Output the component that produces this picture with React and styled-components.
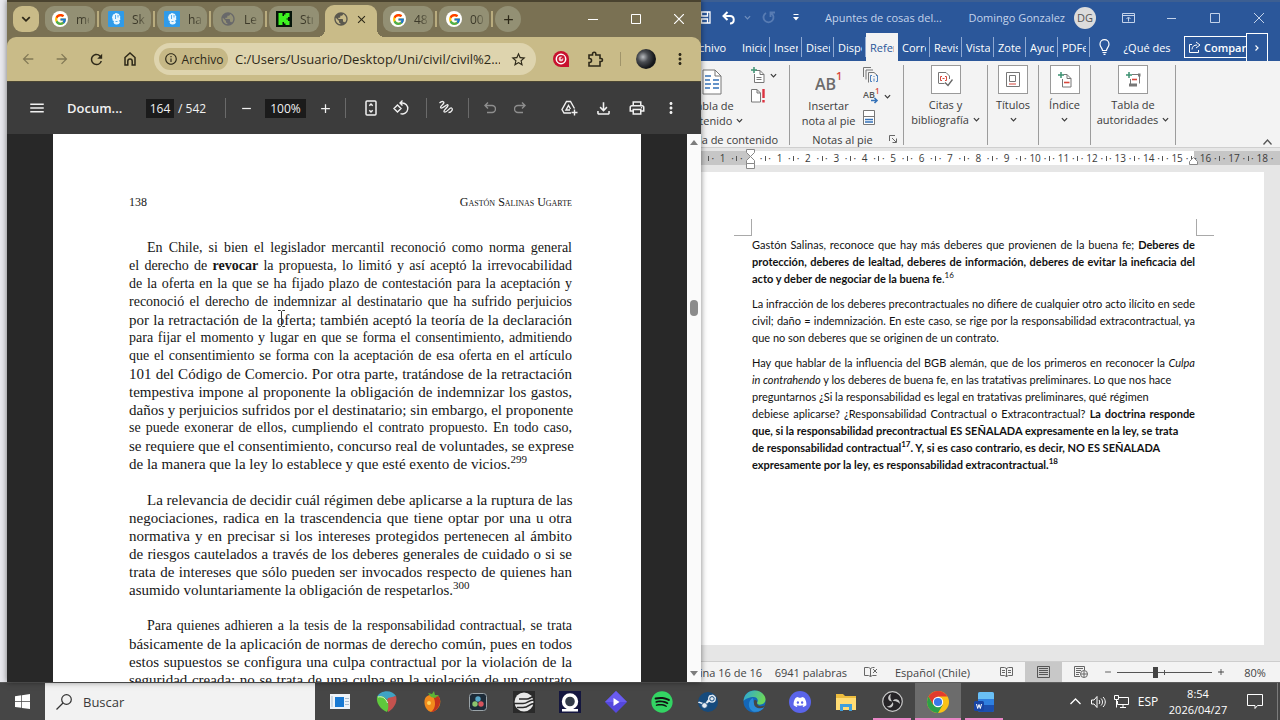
import React, { useState } from 'react';
import styled, { createGlobalStyle } from 'styled-components';
import { FcGoogle } from 'react-icons/fc';
import { FaSpotify, FaSteam, FaDiscord } from 'react-icons/fa';
import {
    MdArrowBack,
    MdArrowForward,
    MdRefresh,
    MdStarBorder,
    MdMoreVert,
    MdMenu,
    MdRemove,
    MdAdd,
    MdClose,
    MdOutlineInfo,
    MdPublic,
    MdOutlineFileDownload,
    MdOutlinePrint,
} from 'react-icons/md';

const GlobalStyle = createGlobalStyle`
* {
    box-sizing: border-box;
}
body {
    margin: 0;
    font-family: 'Open Sans', 'Noto Sans', sans-serif;
    font-size: 12px;
    overflow: hidden;
}
button, input {
    font: inherit;
    color: inherit;
    margin: 0;
    padding: 0;
    border: none;
    background: none;
}
button {
    display: flex;
    align-items: center;
    justify-content: center;
    flex-shrink: 0;
}
svg {
    display: block;
    flex-shrink: 0;
}
p {
    margin: 0;
}
`

const Desktop = styled.div`
position: relative;
height: 100vh;
display: flex;
flex-direction: column;
background-color: #e9e9ee;
`
const Workspace = styled.div`
flex: 1;
min-height: 0;
display: flex;
justify-content: flex-end;
`

/* ---------- browser window ---------- */

const BrowserWindow = styled.section`
position: absolute;
top: 0;
left: 7px;
bottom: 38px;
width: calc(50% + 54px);
display: flex;
flex-direction: column;
background-color: #7a7153;
border-top: 2px solid #4a432f;
box-shadow: 0 0 6px #00000080;
overflow: hidden;
`
const TabStrip = styled.div`
height: 35px;
display: flex;
align-items: center;
padding-left: 6px;
padding-bottom: 1px;
flex-shrink: 0;
`
const TabSearch = styled.button`
width: 26px;
height: 26px;
border-radius: 9px;
background-color: #c9bb88;
color: #2d2818;
`
const TabDivider = styled.span`
width: 2px;
height: 16px;
margin: 0 2px;
flex-shrink: 0;
background-color: ${props => props.$hidden ? 'transparent' : '#b9ac7e'};
`
const Tab = styled.button`
width: 50px;
height: 26px;
justify-content: flex-start;
gap: 8px;
padding-left: 7px;
border-radius: 9px;
background-color: #939074;
color: #3d3a2a;
`
const TabText = styled.span`
width: 13px;
overflow: hidden;
white-space: nowrap;
text-align: left;
mask-image: linear-gradient(90deg, #000 50%, #0005);
`
const ActiveTab = styled.div`
position: relative;
width: 52px;
height: 32px;
margin-top: 4px;
display: flex;
align-items: center;
gap: 6px;
padding: 0 0 4px 8px;
border-radius: 9px 9px 0 0;
background-color: #c9bb88;
color: #2d2818;
flex-shrink: 0;
&::before, &::after {
    content: '';
    position: absolute;
    bottom: 0;
    width: 8px;
    height: 8px;
}
&::before {
    left: -8px;
    background: radial-gradient(circle at 0 0, transparent 8px, #c9bb88 8px);
}
&::after {
    right: -8px;
    background: radial-gradient(circle at 100% 0, transparent 8px, #c9bb88 8px);
}
`
const GoogleBadge = styled.span`
width: 16px;
height: 16px;
border-radius: 50%;
background-color: #fff;
display: flex;
align-items: center;
justify-content: center;
flex-shrink: 0;
`
const NewTab = styled.button`
width: 26px;
height: 26px;
border-radius: 50%;
background-color: #939074;
color: #2d2818;
`
const WindowButtons = styled.div`
margin-left: auto;
padding-right: 1px;
display: flex;
`
const WindowButton = styled.button`
width: ${props => props.$w || 43}px;
height: 30px;
color: #fff;
`
const Toolbar = styled.div`
height: 44px;
display: flex;
align-items: center;
padding: 0 4px;
background-color: #c9bb88;
color: #2d2818;
border-radius: 9px 9px 0 0;
flex-shrink: 0;
`
const IconButton = styled.button`
width: ${props => props.$w || 34}px;
height: 32px;
opacity: ${props => props.$off ? 0.45 : 1};
`
const Omnibox = styled.div`
flex: 1;
min-width: 0;
height: 32px;
margin: 0 8px 0 7px;
padding-left: 5px;
display: flex;
align-items: center;
border-radius: 16px;
background-color: #ded4ae;
`
const SiteChip = styled.button`
height: 22px;
width: 69px;
gap: 4px;
border-radius: 11px;
background-color: #c6b886;
`
const UrlInput = styled.input`
flex: 1;
min-width: 0;
margin-left: 7px;
font-size: 13px;
`
const ToolbarLine = styled.span`
width: 1px;
height: ${props => props.$h || 14}px;
margin-left: ${props => props.$before || 8}px;
margin-right: ${props => props.$after || 8}px;
background-color: ${props => props.$color || '#a0946a'};
flex-shrink: 0;
`
const Avatar = styled.button`
width: 20px;
height: 20px;
margin: 0 7px;
border-radius: 50%;
background: radial-gradient(circle at 35% 40%, #b9bcc0 0, #4a4d52 30%, #15171a 65%);
`

/* ---------- pdf viewer ---------- */

const PdfBar = styled.div`
height: 53px;
display: flex;
align-items: center;
padding: 0 13px;
background-color: #3c3c3c;
color: #f1f1f1;
border-top: 1px solid #4b4634;
flex-shrink: 0;
`
const PdfTitle = styled.span`
width: 92px;
padding-left: 13px;
font-size: 13px;
font-weight: 600;
white-space: nowrap;
`
const PdfField = styled.input`
width: ${props => props.$w}px;
height: 19px;
text-align: center;
background-color: #1b1b1b;
`
const PageTotal = styled.span`
width: 40px;
margin-left: 4px;
white-space: nowrap;
`
const Spacer = styled.span`
flex: 1;
`
const PdfBody = styled.div`
flex: 1;
min-height: 0;
display: flex;
background-color: #282828;
`
const PdfPage = styled.article`
flex: 1;
min-width: 0;
margin: 0 46px;
padding: 59px 69px 0 76px;
background-color: #fff;
color: #161616;
font-family: 'Liberation Serif', serif;
font-size: 15px;
line-height: 18px;
overflow: hidden;
`
const RunningHead = styled.div`
display: flex;
justify-content: space-between;
font-size: 12px;
margin-bottom: 28px;
`
const SmallCaps = styled.span`
font-variant: small-caps;
`
const PdfParagraph = styled.p`
margin-bottom: 18px;
text-indent: 18px;
`
const PdfLine = styled.span`
display: block;
height: 18px;
font-size: ${props => props.$tight ? 14 : 15}px;
white-space: nowrap;
text-align: left;
text-align-last: ${props => props.$last ? 'left' : 'justify'};
&:not(:first-child) {
    text-indent: 0;
}
`
const Sup = styled.sup`
font-size: ${props => props.$small ? 8 : 11}px;
line-height: 0;
font-weight: ${props => props.$plain ? 400 : 'inherit'};
`
const Scrollbar = styled.div`
width: 14px;
display: flex;
flex-direction: column;
align-items: center;
justify-content: space-between;
padding: 5px 0 5px;
background-color: #fafafa;
color: #7d7d7d;
`
const ScrollTrack = styled.div`
flex: 1;
width: 8px;
padding-top: 155px;
`
const ScrollThumb = styled.div`
height: 16px;
border-radius: 4px;
background-color: #8b8b8b;
`
const Pointer = styled.svg`
position: absolute;
left: 270px;
top: 308px;
`

/* ---------- word processor ---------- */

const WordWindow = styled.section`
width: 50%;
display: flex;
flex-direction: column;
background-color: #e6e6e6;
color: #3b3b3b;
font-size: 11px;
`
const WordTitleBar = styled.div`
height: 33px;
display: flex;
align-items: center;
padding-left: 53px;
border-top: 2px solid #3d5f92;
background-color: #2b579a;
color: #c4d3ea;
flex-shrink: 0;
`
const WordTitle = styled.span`
width: 126px;
margin-left: 18px;
font-size: 11px;
white-space: nowrap;
`
const UserName = styled.span`
flex: 1;
text-align: right;
padding-right: 9px;
white-space: nowrap;
`
const UserBadge = styled.span`
width: 22px;
height: 22px;
margin-right: 11px;
line-height: 22px;
border-radius: 50%;
background-color: #dcdcdc;
color: #555;
text-align: center;
`
const RibbonTabs = styled.nav`
height: 28px;
display: flex;
align-items: stretch;
background-color: #2b579a;
color: #fff;
flex-shrink: 0;
`
const FileTab = styled.button`
width: 98px;
padding-right: 12px;
justify-content: flex-end;
`
const RibbonTab = styled.button`
width: 32px;
padding: 0 4px;
display: block;
overflow: hidden;
white-space: nowrap;
text-align: left;
background: ${props => props.$active ? '#f3f3f3' : 'linear-gradient(#8fa9d2, #8fa9d2) right center / 1px 20px no-repeat'};
color: ${props => props.$active ? '#2b579a' : '#fff'};
`
const TabLabel = styled.span`
display: block;
overflow: hidden;
`
const TellMe = styled.button`
width: 84px;
gap: 13px;
padding-left: 6px;
overflow: hidden;
white-space: nowrap;
`
const ShareButton = styled.button`
flex: 1;
justify-content: flex-start;
gap: 3px;
height: 22px;
margin: 3px 0 3px 10px;
padding-left: 4px;
border: 1px solid #fff;
border-right: none;
font-weight: 600;
font-size: 11px;
overflow: hidden;
white-space: nowrap;
`
const MoreTabs = styled.button`
width: 22px;
border: 1px solid #fff;
border-bottom: none;
margin-right: 12px;
`
const Ribbon = styled.div`
height: 87px;
display: flex;
padding: 4px 0 2px 29px;
background-color: #f3f3f3;
border-bottom: 1px solid #cfcfcf;
flex-shrink: 0;
`
const RibbonGroup = styled.div`
width: ${props => props.$w}px;
display: flex;
flex-direction: column;
justify-content: space-between;
border-right: 1px solid #9c9c9c;
flex-shrink: 0;
`
const GroupTools = styled.div`
display: flex;
justify-content: center;
gap: 8px;
`
const BigButton = styled.button`
flex-direction: column;
justify-content: flex-start;
line-height: 15px;
white-space: nowrap;
`
const BigIcon = styled.span`
height: 33px;
display: flex;
align-items: center;
`
const BoxedIcon = styled.span`
width: 30px;
height: 29px;
margin-bottom: 3px;
display: flex;
align-items: center;
justify-content: center;
border: 1px solid #9a9a9a;
background-color: #fff;
`
const ButtonLine = styled.span`
display: flex;
align-items: center;
justify-content: center;
gap: 4px;
min-height: 15px;
`
const SmallTools = styled.div`
display: flex;
flex-direction: column;
gap: 5px;
padding-top: 2px;
`
const SmallButton = styled.button`
gap: 5px;
height: 16px;
justify-content: flex-start;
`
const GroupName = styled.div`
display: flex;
align-items: center;
justify-content: center;
gap: 16px;
height: 12px;
padding-left: ${props => props.$indent || 0}px;
white-space: nowrap;
`
const CollapseRibbon = styled.button`
margin: auto 8px 0 auto;
`
const Ruler = styled.div`
position: relative;
height: 14px;
margin: 3px 0 7px;
padding: 0 4px 0 68px;
display: grid;
grid-template-columns: repeat(20, 1fr);
align-items: center;
background: linear-gradient(90deg, #c6c6c6 111px, #fff 111px, #fff calc(100% - 86px), #c6c6c6 calc(100% - 86px));
font-size: 10px;
line-height: 14px;
flex-shrink: 0;
`
const RulerCell = styled.span`
display: grid;
grid-template-columns: 1px 1fr 12px 1fr;
align-items: center;
justify-items: center;
white-space: nowrap;
&::before {
    content: '';
    width: 1px;
    height: 5px;
    background-color: #555;
}
`
const Indent = styled.svg`
position: absolute;
top: -2px;
left: ${props => props.$right ? 'auto' : '106px'};
right: ${props => props.$right ? '82px' : 'auto'};
`
const WordPage = styled.article`
flex: 1;
margin: 0 16px 16px 32px;
padding: 47px 50px 0 62px;
background-color: #fff;
color: #111;
font-family: 'Lato', sans-serif;
font-size: 11px;
line-height: 17px;
`
const Corners = styled.div`
display: flex;
justify-content: space-between;
`
const Corner = styled.span`
width: 18px;
height: 17px;
border-bottom: 1px solid #a9a9a9;
border-${props => props.$side}: 1px solid #a9a9a9;
`
const DocText = styled.div`
padding: 0 19px 0 18px;
`
const DocParagraph = styled.p`
margin-bottom: 8px;
`
const DocLine = styled.span`
display: block;
white-space: nowrap;
text-align-last: ${props => props.$full ? 'justify' : 'left'};
`
const StatusBar = styled.footer`
height: 21px;
display: flex;
align-items: center;
padding-left: 40px;
background-color: #f3f3f3;
border-top: 1px solid #cdcdcd;
color: #444;
white-space: nowrap;
flex-shrink: 0;
`
const StatusItem = styled.span`
width: ${props => props.$w}px;
text-align: ${props => props.$align || 'left'};
flex-shrink: 0;
`
const ViewButton = styled.button`
width: 37px;
height: 20px;
background-color: ${props => props.$active ? '#c8c8c8' : 'transparent'};
`
const ZoomSlider = styled.input`
flex: 1;
min-width: 0;
height: 14px;
appearance: none;
background: linear-gradient(#555, #555) center / 100% 1px no-repeat, linear-gradient(#555, #555) center / 1px 5px no-repeat;
&::-webkit-slider-thumb {
    appearance: none;
    width: 5px;
    height: 11px;
    background-color: #444;
}
`

/* ---------- taskbar ---------- */

const Taskbar = styled.footer`
height: 38px;
display: flex;
align-items: stretch;
background-color: #464646;
border-top: 1px solid #5c5c5c;
color: #fff;
flex-shrink: 0;
`
const StartButton = styled.button`
width: 45px;
`
const SearchBox = styled.label`
width: 270px;
margin-right: 2px;
padding-left: 11px;
display: flex;
align-items: center;
gap: 11px;
background-color: #f2f2f2;
color: #3a3a3a;
`
const SearchInput = styled.input`
flex: 1;
min-width: 0;
font-size: 13px;
&::placeholder {
    color: #3a3a3a;
    opacity: 1;
}
`
const TaskButton = styled.button`
width: 46px;
background-color: ${props => props.$active ? '#6c6c6c' : 'transparent'};
background-image: ${props => props.$open ? 'linear-gradient(#ea86c6, #ea86c6)' : 'none'};
background-position: center bottom;
background-size: ${props => props.$active ? 46 : 38}px 2px;
background-repeat: no-repeat;
`
const Tray = styled.div`
margin-left: auto;
display: flex;
align-items: stretch;
border-right: 1px solid #7c7c7c;
margin-right: 2px;
`
const TrayButton = styled.button`
width: ${props => props.$w || 23}px;
`
const Clock = styled.button`
width: 70px;
flex-direction: column;
line-height: 16px;
font-size: 11px;
`

// the ribbon is too narrow for its tabs, so their names are cut short
const TAB_NAMES = ['Inicio', 'Inser', 'Diseñ', 'Dispo', 'Refer', 'Corre', 'Revis', 'Vista', 'Zote', 'Ayud', 'PDFe']

const RULER = ['1', '', '1', '2', '3', '4', '5', '6', '7', '8', '9', '10', '11', '12', '13', '14', '15', '16', '17', '18']

const BOOK = [
    [
        { tight: true, text: 'En Chile, si bien el legislador mercantil reconoció como norma general' },
        { tight: true, text: <>el derecho de <b>revocar</b> la propuesta, lo limitó y así aceptó la irrevocabilidad</> },
        { tight: true, text: 'de la oferta en la que se ha fijado plazo de contestación para la aceptación y' },
        { tight: true, text: 'reconoció el derecho de indemnizar al destinatario que ha sufrido perjuicios' },
        { text: 'por la retractación de la oferta; también aceptó la teoría de la declaración' },
        { tight: true, text: 'para fijar el momento y lugar en que se forma el consentimiento, admitiendo' },
        { tight: true, text: 'que el consentimiento se forma con la aceptación de esa oferta en el artículo' },
        { text: '101 del Código de Comercio. Por otra parte, tratándose de la retractación' },
        { text: 'tempestiva impone al proponente la obligación de indemnizar los gastos,' },
        { text: 'daños y perjuicios sufridos por el destinatario; sin embargo, el proponente' },
        { tight: true, text: 'se puede exonerar de ellos, cumpliendo el contrato propuesto. En todo caso,' },
        { text: 'se requiere que el consentimiento, concurso real de voluntades, se exprese' },
        { text: <>de la manera que la ley lo establece y que esté exento de vicios.<Sup>299</Sup></> },
    ],
    [
        { text: 'La relevancia de decidir cuál régimen debe aplicarse a la ruptura de las' },
        { text: 'negociaciones, radica en la trascendencia que tiene optar por una u otra' },
        { text: 'normativa y en precisar si los intereses protegidos pertenecen al ámbito' },
        { text: 'de riesgos cautelados a través de los deberes generales de cuidado o si se' },
        { text: 'trata de intereses que sólo pueden ser invocados respecto de quienes han' },
        { text: <>asumido voluntariamente la obligación de respetarlos.<Sup>300</Sup></> },
    ],
    [
        { tight: true, text: 'Para quienes adhieren a la tesis de la responsabilidad contractual, se trata' },
        { text: 'básicamente de la aplicación de normas de derecho común, pues en todos' },
        { text: 'estos supuestos se configura una culpa contractual por la violación de la' },
        { text: 'seguridad creada; no se trata de una culpa en la violación de un contrato' },
    ],
]

const Caret = ({ size = 7 }) => (
    <svg width={size} height={size} viewBox="0 0 8 8" fill="none" stroke="currentColor" strokeWidth="1.4">
        <path d="M1 2.5 4 5.5 7 2.5" />
    </svg>
)

const BlueFavicon = () => (
    <svg width="16" height="16" viewBox="0 0 16 16">
        <rect width="16" height="16" rx="1" fill="#2f9bea" />
        <path d="M4.500 5q0-2 2-2 1-1.500 3-.5 2 0 2 2 1.500 1 .5 2.500 1 2-1 2.500l1 2q-1 2.500-4 2-2 0-2.500-2l.5-1.500q-2 0-1.500-2-1-1.500 0-3z" fill="#e8f6ff" />
        <path d="M7.500 4v4M10 4v2.500M7.500 10.500h2" stroke="#2f9bea" strokeWidth=".8" />
    </svg>
)

const KickFavicon = () => (
    <svg width="16" height="16" viewBox="0 0 16 16">
        <rect width="16" height="16" fill="#06140a" />
        <path d="M2.500 2h4v3H8V3.500h1.500V2h4v4H12v1.500h-1.500v1H12V10h1.500v4h-4v-1.500H8V11H6.500v3h-4z" fill="#3df220" />
    </svg>
)

const Tabs = () => {
    const google = <GoogleBadge><FcGoogle size={13} /></GoogleBadge>
    const before = [
        { icon: google, text: 'me' },
        { icon: <BlueFavicon />, text: 'Sk' },
        { icon: <BlueFavicon />, text: 'ha' },
        { icon: <MdPublic size={16} color="#68686a" />, text: 'Le' },
        { icon: <KickFavicon />, text: 'Str' },
    ]
    const after = [
        { icon: google, text: '48' },
        { icon: google, text: '00' },
    ]
    return (
        <TabStrip>
            <TabSearch aria-label="Buscar pestañas"><Caret size={10} /></TabSearch>
            <TabDivider $hidden />
            {before.map((tab, i) => (
                <React.Fragment key={i}>
                    <Tab>{tab.icon}<TabText>{tab.text}</TabText></Tab>
                    <TabDivider $hidden={i === before.length - 1} />
                </React.Fragment>
            ))}
            <ActiveTab>
                <MdPublic size={16} color="#5b584d" />
                <button aria-label="Cerrar pestaña"><MdClose size={13} /></button>
            </ActiveTab>
            <TabDivider $hidden />
            {after.map((tab, i) => (
                <React.Fragment key={i}>
                    <Tab>{tab.icon}<TabText>{tab.text}</TabText></Tab>
                    <TabDivider />
                </React.Fragment>
            ))}
            <NewTab aria-label="Nueva pestaña"><MdAdd size={15} /></NewTab>
            <WindowButtons>
                <WindowButton aria-label="Minimizar">
                    <svg width="10" height="10" stroke="currentColor"><path d="M0 5.500h10" /></svg>
                </WindowButton>
                <WindowButton aria-label="Maximizar">
                    <svg width="10" height="10" stroke="currentColor" fill="none"><path d="M.5.5h9v9h-9z" /></svg>
                </WindowButton>
                <WindowButton aria-label="Cerrar">
                    <svg width="10" height="10" stroke="currentColor" strokeWidth="1.2"><path d="m0 0 10 10M10 0 0 10" /></svg>
                </WindowButton>
            </WindowButtons>
        </TabStrip>
    )
}

const BrowserToolbar = () => (
    <Toolbar>
        <IconButton $off aria-label="Atrás"><MdArrowBack size={16} /></IconButton>
        <IconButton $off aria-label="Adelante"><MdArrowForward size={16} /></IconButton>
        <IconButton aria-label="Recargar"><MdRefresh size={17} /></IconButton>
        <IconButton aria-label="Inicio">
            <svg width="12" height="14" viewBox="0 0 12 14" fill="none" stroke="currentColor" strokeWidth="1.5">
                <path d="M1 5.500 6 1l5 4.500V13H8.200V9.300a2.200 2.200 0 0 0-4.400 0V13H1z" />
            </svg>
        </IconButton>
        <Omnibox>
            <SiteChip><MdOutlineInfo size={14} />Archivo</SiteChip>
            <UrlInput aria-label="Dirección" defaultValue="C:/Users/Usuario/Desktop/Uni/civil/civil%2..." />
            <IconButton $w={36} aria-label="Favorito"><MdStarBorder size={17} /></IconButton>
        </Omnibox>
        <IconButton aria-label="Extensión">
            <svg width="16" height="16" viewBox="0 0 16 16">
                <path d="M8 0a8 8 0 1 0 0 16h8V8a8 8 0 0 0-8-8z" fill="#c8102e" />
                <circle cx="8" cy="8" r="4.700" fill="none" stroke="#fff" strokeWidth="1.500" />
                <circle cx="8" cy="8" r="2.400" fill="#f3c9cf" />
                <path d="m8 8 3-3" stroke="#c8102e" strokeWidth="1.500" />
            </svg>
        </IconButton>
        <IconButton aria-label="Extensiones">
            <svg width="17" height="17" viewBox="0 0 17 17" fill="none" stroke="currentColor" strokeWidth="1.600">
                <path d="M2 4h3.500V3a1.700 1.700 0 0 1 3.400 0v1H13v3.500h1a1.500 1.500 0 0 1 0 3h-1V15H2v-3.500h.5a2 2 0 0 0 0-4H2z" />
            </svg>
        </IconButton>
        <ToolbarLine />
        <Avatar aria-label="Perfil" />
        <IconButton aria-label="Menú"><MdMoreVert size={18} /></IconButton>
    </Toolbar>
)

const PdfToolbar = () => {
    const [page, setPage] = useState('164')
    const [zoom, setZoom] = useState('100%')

    return (
        <PdfBar>
            <IconButton aria-label="Menú"><MdMenu size={18} /></IconButton>
            <PdfTitle>Docum...</PdfTitle>
            <PdfField $w={28} aria-label="Página" value={page} onChange={e => setPage(e.target.value)} />
            <PageTotal>/ 542</PageTotal>
            <ToolbarLine $h={20} $before={7} $after={1} $color="#6a6a6a" />
            <IconButton $w={38} aria-label="Alejar"><MdRemove size={15} /></IconButton>
            <PdfField $w={41} aria-label="Zoom" value={zoom} onChange={e => setZoom(e.target.value)} />
            <IconButton $w={38} aria-label="Acercar"><MdAdd size={15} /></IconButton>
            <ToolbarLine $h={20} $before={1} $after={10} $color="#6a6a6a" />
            <IconButton $w={30} aria-label="Ajustar">
                <svg width="12" height="16" viewBox="0 0 12 16" fill="none" stroke="currentColor" strokeWidth="1.500">
                    <rect x="1" y="1" width="10" height="14" rx="1" />
                    <path d="M4.300 5.700 6 4l1.700 1.700M4.300 10.300 6 12l1.700-1.700" />
                </svg>
            </IconButton>
            <IconButton $w={30} aria-label="Girar">
                <svg width="16" height="16" viewBox="0 0 16 16" fill="none" stroke="currentColor" strokeWidth="1.400">
                    <path d="M1 8.500 4.500 5 8 8.500 4.500 12zM7 3h2a5.500 5.500 0 1 1-1.500 10.700M9.500.5 7 3l2.500 2.500" />
                </svg>
            </IconButton>
            <ToolbarLine $h={20} $before={10} $after={4} $color="#6a6a6a" />
            <IconButton $w={30} aria-label="Dibujar">
                <svg width="16" height="16" viewBox="0 0 16 16" fill="none" stroke="currentColor" strokeWidth="1.300">
                    <path d="M1.500 3C4 .5 7 1.500 5.500 3.500S1.500 7 3 8s6-4.500 7-3-6 6-3.500 7 5-5 7-4 0 4.500-3 4.500" />
                </svg>
            </IconButton>
            <ToolbarLine $h={20} $before={7} $after={6} $color="#6a6a6a" />
            <IconButton $w={30} $off aria-label="Deshacer">
                <svg width="12" height="12" viewBox="0 0 12 12" fill="none" stroke="currentColor" strokeWidth="1.400">
                    <path d="M4 .5 1 3.500l3 3M1 3.500h7a3.300 3.300 0 0 1 0 7H3" />
                </svg>
            </IconButton>
            <IconButton $w={30} $off aria-label="Rehacer">
                <svg width="12" height="12" viewBox="0 0 12 12" fill="none" stroke="currentColor" strokeWidth="1.400">
                    <path d="m8 .5 3 3-3 3M11 3.500H4a3.300 3.300 0 0 0 0 7h5" />
                </svg>
            </IconButton>
            <Spacer />
            <IconButton aria-label="Guardar en Drive">
                <svg width="17" height="16" viewBox="0 0 17 16" fill="none" stroke="currentColor" strokeWidth="1.400">
                    <path d="M10 13H3L1 9.500 5.500 1.500h4l4 7M9 10H5l2.500-4.500L9.500 9M13.500 9.500v6M10.500 12.500h6" />
                </svg>
            </IconButton>
            <IconButton aria-label="Descargar"><MdOutlineFileDownload size={19} /></IconButton>
            <IconButton aria-label="Imprimir"><MdOutlinePrint size={18} /></IconButton>
            <IconButton aria-label="Más"><MdMoreVert size={18} /></IconButton>
        </PdfBar>
    )
}

const Browser = () => (
    <BrowserWindow>
        <Tabs />
        <BrowserToolbar />
        <PdfToolbar />
        <PdfBody>
            <PdfPage>
                <RunningHead>
                    <span>138</span>
                    <SmallCaps>Gastón Salinas Ugarte</SmallCaps>
                </RunningHead>
                {BOOK.map((lines, i) => (
                    <PdfParagraph key={i}>
                        {lines.map((line, j) => (
                            <PdfLine key={j} $tight={line.tight} $last={i < 2 && j === lines.length - 1}>{line.text}</PdfLine>
                        ))}
                    </PdfParagraph>
                ))}
            </PdfPage>
            <Scrollbar>
                <svg width="8" height="6"><path d="M0 6h8L4 1z" fill="currentColor" /></svg>
                <ScrollTrack><ScrollThumb /></ScrollTrack>
                <svg width="8" height="6"><path d="M0 0h8L4 5z" fill="currentColor" /></svg>
            </Scrollbar>
        </PdfBody>
        <Pointer width="9" height="18" viewBox="0 0 9 18" fill="none" stroke="#333">
            <path d="M1 .5h2.500l1 1 1-1H8M4.500 1.500v14M1 16.500h2.500l1-1 1 1H8" />
        </Pointer>
    </BrowserWindow>
)

const SheetIcon = ({ w = 20, h = 26 }) => (
    <svg width={w} height={h} viewBox="0 0 20 26" fill="none">
        <path d="M1 1h12l6 6v18H1z" fill="#fff" stroke="#777" />
        <path d="M13 1v6h6" stroke="#777" />
        <path d="M3 7h6M3 11h5M3 15h6M3 19h5M11 11h6M11 15h6M11 19h6" stroke="#3572b8" strokeWidth="1.300" />
    </svg>
)

const WordRibbon = () => (
    <Ribbon>
        <RibbonGroup $w={121}>
            <GroupTools>
                <BigButton>
                    <BigIcon><SheetIcon /></BigIcon>
                    <ButtonLine>Tabla de</ButtonLine>
                    <ButtonLine>contenido <Caret /></ButtonLine>
                </BigButton>
                <SmallTools>
                    <SmallButton aria-label="Agregar texto">
                        <svg width="14" height="16" viewBox="0 0 14 16" fill="none">
                            <path d="M4.500 3.500H9l4 4v8H3.500V7" stroke="#777" fill="#fff" />
                            <path d="M9 3.500v4h4M5.500 10.500h5M5.500 12.500h5" stroke="#777" />
                            <path d="M3 0v6M0 3h6" stroke="#3d9172" strokeWidth="1.500" />
                        </svg>
                        <Caret />
                    </SmallButton>
                    <SmallButton aria-label="Actualizar tabla">
                        <svg width="15" height="14" viewBox="0 0 15 14" fill="none">
                            <path d="M.5.500H6l3.500 3.500v9H.5zM6 .5V4h3.500" fill="#fff" stroke="#777" />
                            <path d="M12.500 0v9M12.500 11v2.500" stroke="#dc3340" strokeWidth="2.400" />
                        </svg>
                    </SmallButton>
                </SmallTools>
            </GroupTools>
            <GroupName>Tabla de contenido</GroupName>
        </RibbonGroup>
        <RibbonGroup $w={114}>
            <GroupTools>
                <BigButton>
                    <BigIcon>
                        <svg width="28" height="24" viewBox="0 0 28 24">
                            <text x="0" y="20" fontFamily="Open Sans, sans-serif" fontSize="16" fontWeight="600" fill="#6c6c6c">AB</text>
                            <text x="21" y="10" fontFamily="Open Sans, sans-serif" fontSize="11" fontWeight="600" fill="#d8473c">1</text>
                        </svg>
                    </BigIcon>
                    <ButtonLine>Insertar</ButtonLine>
                    <ButtonLine>nota al pie</ButtonLine>
                </BigButton>
                <SmallTools>
                    <SmallButton aria-label="Nota al final">
                        <svg width="16" height="16" viewBox="0 0 16 16" fill="none">
                            <path d="M.5 10V.5H8M3 12.500V3h7" stroke="#777" />
                            <path d="M5.500 15.500v-10H11l3.500 3" stroke="#777" />
                            <path d="M9 8.500H7.500v6H9M13 8.500h1.500v6H13M11 9v1M11 11.500v3" stroke="#4a7fbd" />
                        </svg>
                    </SmallButton>
                    <SmallButton aria-label="Siguiente nota">
                        <svg width="16" height="16" viewBox="0 0 16 16">
                            <text x="0" y="10" fontFamily="Open Sans, sans-serif" fontSize="9" fontWeight="600" fill="#555">AB</text>
                            <text x="12" y="6" fontFamily="Open Sans, sans-serif" fontSize="8" fontWeight="600" fill="#d8473c">1</text>
                            <path d="M8 12.500h6M11.500 10l2.500 2.500-2.500 2.500" stroke="#3572b8" strokeWidth="1.600" fill="none" />
                        </svg>
                        <Caret />
                    </SmallButton>
                    <SmallButton aria-label="Mostrar notas">
                        <svg width="12" height="15" viewBox="0 0 12 15" fill="none">
                            <path d="M.5.500h11v14H.5z" fill="#fff" stroke="#777" />
                            <path d="M0 6.500h12" stroke="#777" />
                            <path d="M2 9.500h8M2 12h8" stroke="#3572b8" strokeWidth="1.500" />
                        </svg>
                    </SmallButton>
                </SmallTools>
            </GroupTools>
            <GroupName $indent={16}>
                Notas al pie
                <svg width="8" height="8" viewBox="0 0 8 8" fill="none" stroke="#666"><path d="M.5 6V.5H6M3 3l4 4M7.500 3.500v4h-4" /></svg>
            </GroupName>
        </RibbonGroup>
        <RibbonGroup $w={84}>
            <BigButton>
                <BoxedIcon>
                    <svg width="15" height="15" viewBox="0 0 15 15" fill="none">
                        <path d="M.5 11V.5H8L11.500 4v3M.5 11.500h6" stroke="#777" />
                        <path d="M4 4.500H2.500v4H4M7 4.500h1.500v4H7M4.500 6.500h2" stroke="#d8473c" />
                        <path d="m7 10.500 3 3 4.500-6" stroke="#666" strokeWidth="1.300" />
                    </svg>
                </BoxedIcon>
                <ButtonLine>Citas y</ButtonLine>
                <ButtonLine>bibliografía <Caret /></ButtonLine>
            </BigButton>
        </RibbonGroup>
        <RibbonGroup $w={51}>
            <BigButton>
                <BoxedIcon>
                    <svg width="14" height="15" viewBox="0 0 14 15" fill="none">
                        <path d="M.5.500h13v14H.5z" stroke="#777" />
                        <path d="M3.500 3.500h6v6h-6z" stroke="#777" />
                        <path d="M3 12h7" stroke="#d8473c" />
                    </svg>
                </BoxedIcon>
                <ButtonLine>Títulos</ButtonLine>
                <ButtonLine><Caret /></ButtonLine>
            </BigButton>
        </RibbonGroup>
        <RibbonGroup $w={52}>
            <BigButton>
                <BoxedIcon>
                    <svg width="14" height="16" viewBox="0 0 14 16" fill="none">
                        <path d="M5.500 2.500H9l4 4v8.500H4.500V7M9 2.500v4h4" stroke="#777" />
                        <path d="M3 0v6M0 3h6" stroke="#3d9172" strokeWidth="1.500" />
                        <path d="M6 10.500h5.500" stroke="#d8473c" strokeWidth="1.600" />
                    </svg>
                </BoxedIcon>
                <ButtonLine>Índice</ButtonLine>
                <ButtonLine><Caret /></ButtonLine>
            </BigButton>
        </RibbonGroup>
        <RibbonGroup $w={85}>
            <BigButton>
                <BoxedIcon>
                    <svg width="15" height="15" viewBox="0 0 15 15" fill="none">
                        <path d="M6 2.500h7.500v9M4.500 7v5" stroke="#777" />
                        <path d="M12 1.500h2.500v3H12zM3 11.500h8v3H3z" fill="#777" />
                        <path d="M3 0v6M0 3h6" stroke="#3d9172" strokeWidth="1.500" />
                        <path d="M6 7.500h5" stroke="#d8473c" strokeWidth="1.600" />
                    </svg>
                </BoxedIcon>
                <ButtonLine>Tabla de</ButtonLine>
                <ButtonLine>autoridades <Caret /></ButtonLine>
            </BigButton>
        </RibbonGroup>
        <CollapseRibbon aria-label="Contraer cinta">
            <svg width="9" height="6" viewBox="0 0 9 6" fill="none" stroke="#555" strokeWidth="1.300"><path d="M.5 5.500 4.500 1l4 4.500" /></svg>
        </CollapseRibbon>
    </Ribbon>
)

const WordTop = () => (
    <>
        <WordTitleBar>
            <IconButton $w={22} aria-label="Guardar">
                <svg width="13" height="13" viewBox="0 0 13 13" fill="none" stroke="#fff" strokeWidth="1.300">
                    <path d="M1 1h11v11H1zM3.500 1v4h6V1M3.500 12V8h6v4" />
                </svg>
            </IconButton>
            <IconButton $w={28} aria-label="Deshacer">
                <svg width="14" height="14" viewBox="0 0 14 14" fill="none" stroke="#fff" strokeWidth="2">
                    <path d="M5.500 1 1.500 5l4 4M1.500 5H8c5 0 5 7.500 0 7.500" />
                </svg>
            </IconButton>
            <IconButton $w={8} $off aria-label="Opciones de deshacer"><Caret /></IconButton>
            <IconButton $w={34} $off aria-label="Rehacer">
                <svg width="13" height="13" viewBox="0 0 13 13" fill="none" stroke="#8fa9d2" strokeWidth="1.800">
                    <path d="M4 2a5 5 0 1 0 5 0M8.500 6V1.500H13" />
                </svg>
            </IconButton>
            <IconButton $w={22} aria-label="Personalizar">
                <svg width="6" height="7" viewBox="0 0 6 7"><path d="M.5 0h5v1h-5zM0 3h6L3 6.500z" fill="#fff" /></svg>
            </IconButton>
            <WordTitle>Apuntes de cosas del...</WordTitle>
            <UserName>Domingo Gonzalez</UserName>
            <UserBadge>DG</UserBadge>
            <WindowButton $w={42} aria-label="Opciones de cinta">
                <svg width="13" height="10" viewBox="0 0 13 10" fill="none" stroke="#c4d3ea"><path d="M.5.500h12v9H.5zM.5 2.500h12M6.500 8.500v-4M4.500 6l2-2 2 2" /></svg>
            </WindowButton>
            <WindowButton $w={44} aria-label="Minimizar">
                <svg width="9" height="10" stroke="#c4d3ea"><path d="M0 5.500h9" /></svg>
            </WindowButton>
            <WindowButton $w={44} aria-label="Maximizar">
                <svg width="10" height="10" stroke="#c4d3ea" fill="none"><path d="M.5.5h9v9h-9z" /></svg>
            </WindowButton>
            <WindowButton aria-label="Cerrar">
                <svg width="10" height="10" stroke="#c4d3ea"><path d="m0 0 10 10M10 0 0 10" /></svg>
            </WindowButton>
        </WordTitleBar>
        <RibbonTabs>
            <FileTab>Archivo</FileTab>
            {TAB_NAMES.map(name => (
                <RibbonTab key={name} $active={name === 'Refer'}><TabLabel>{name}</TabLabel></RibbonTab>
            ))}
            <TellMe>
                <svg width="11" height="16" viewBox="0 0 11 16" fill="none" stroke="#fff" strokeWidth="1.200">
                    <path d="M3.500 11.500C3.500 9 1 8 1 5.200a4.500 4.500 0 0 1 9 0C10 8 7.500 9 7.500 11.500zM3.500 13.500h4M4.500 15.400h2" />
                </svg>
                ¿Qué des
            </TellMe>
            <ShareButton>
                <svg width="12" height="12" viewBox="0 0 12 12" fill="none" stroke="#fff">
                    <path d="M3 3.500H.5v8h9V9M3 8.500c0-3 2-4.500 5-4.500M7 1l4 3-4 3" />
                </svg>
                Compar
            </ShareButton>
            <MoreTabs aria-label="Más pestañas">
                <svg width="4" height="6" viewBox="0 0 4 6" fill="none" stroke="#fff" strokeWidth="1.200"><path d="m.5.500 2.500 2.500L.5 5.500" /></svg>
            </MoreTabs>
        </RibbonTabs>
    </>
)

const WordDocument = () => (
    <WordPage>
        <Corners>
            <Corner $side="right" />
            <Corner $side="left" />
        </Corners>
        <DocText>
            <DocParagraph>
                <DocLine $full>Gastón Salinas, reconoce que hay más deberes que provienen de la buena fe; <b>Deberes de</b></DocLine>
                <DocLine $full><b>protección, deberes de lealtad, deberes de información, deberes de evitar la ineficacia del</b></DocLine>
                <DocLine><b>acto y deber de negociar de la buena fe</b>.<Sup $small $plain>16</Sup></DocLine>
            </DocParagraph>
            <DocParagraph>
                <DocLine $full>La infracción de los deberes precontractuales no difiere de cualquier otro acto ilícito en sede</DocLine>
                <DocLine $full>civil; daño = indemnización. En este caso, se rige por la responsabilidad extracontractual, ya</DocLine>
                <DocLine>que no son deberes que se originen de un contrato.</DocLine>
            </DocParagraph>
            <DocParagraph>
                <DocLine $full>Hay que hablar de la influencia del BGB alemán, que de los primeros en reconocer la <i>Culpa</i></DocLine>
                <DocLine><i>in contrahendo</i> y los deberes de buena fe, en las tratativas preliminares. Lo que nos hace</DocLine>
                <DocLine>preguntarnos ¿Si la responsabilidad es legal en tratativas preliminares, qué régimen</DocLine>
                <DocLine $full>debiese aplicarse? ¿Responsabilidad Contractual o Extracontractual? <b>La doctrina responde</b></DocLine>
                <DocLine><b>que, si la responsabilidad precontractual ES SEÑALADA expresamente en la ley, se trata</b></DocLine>
                <DocLine><b>de responsabilidad contractual<Sup $small>17</Sup>. Y, si es caso contrario, es decir, NO ES SEÑALADA</b></DocLine>
                <DocLine><b>expresamente por la ley, es responsabilidad extracontractual.<Sup $small>18</Sup></b></DocLine>
            </DocParagraph>
        </DocText>
    </WordPage>
)

const Word = () => {
    const [zoom, setZoom] = useState(40)

    return (
        <WordWindow>
            <WordTop />
            <WordRibbon />
            <Ruler>
                {RULER.map((n, i) => (
                    <RulerCell key={i}><span>·</span><span>{n}</span><span>·</span></RulerCell>
                ))}
                <Indent width="9" height="20" viewBox="0 0 9 20" fill="#fff" stroke="#888">
                    <path d="M.5.500h8v3l-4 4-4-4zM.5 14.500v-3l4-4 4 4v3zM.5 14.500h8v5h-8z" />
                </Indent>
                <Indent $right width="9" height="16" viewBox="0 0 9 16" fill="#fff" stroke="#888">
                    <path d="M.5 15.500v-3l4-4 4 4v3z" />
                </Indent>
            </Ruler>
            <WordDocument />
            <StatusBar>
                <StatusItem $w={82} $align="right">Página 16 de 16</StatusItem>
                <StatusItem $w={85} $align="right">6941 palabras</StatusItem>
                <StatusItem $w={48}>
                    <svg width="62" height="12" viewBox="-17 0 62 12" fill="none" stroke="#666">
                        <path d="M.5 1.500h4l2 1v8l-2-1h-4zM6.500 2.500l2-1h2M6.500 10.500l2-1h4M9 3l4 4M13 3 9 7" />
                    </svg>
                </StatusItem>
                <StatusItem $w={93}>Español (Chile)</StatusItem>
                <ViewButton aria-label="Modo de lectura">
                    <svg width="13" height="12" viewBox="0 0 13 12" fill="none" stroke="#666"><path d="M.5 1.500h4l2 1 2-1h4v8h-4l-2 1-2-1h-4zM6.500 2v9M2 4.500h3M2 6.500h3M8 4.500h3M8 6.500h3" /></svg>
                </ViewButton>
                <ViewButton $active aria-label="Diseño de impresión">
                    <svg width="13" height="12" viewBox="0 0 13 12" fill="none" stroke="#555"><path d="M.5.500h12v11H.5zM2 2.500h9M2 4.500h9M2 6.500h9M2 8.500h9" /></svg>
                </ViewButton>
                <ViewButton aria-label="Diseño web">
                    <svg width="14" height="12" viewBox="0 0 14 12" fill="none" stroke="#666"><path d="M6 10.500H.5V.5h10V4M2 2.500h7M2 4.500h5M2 6.500h4M2 8.500h3" /><circle cx="10" cy="8" r="3.500" /><path d="M7 8h6M10 5v6" /></svg>
                </ViewButton>
                <IconButton $w={18} aria-label="Alejar"><MdRemove size={10} /></IconButton>
                <ZoomSlider type="range" aria-label="Zoom" value={zoom} onChange={e => setZoom(e.target.value)} />
                <IconButton $w={18} aria-label="Acercar"><MdAdd size={10} /></IconButton>
                <StatusItem $w={50} $align="center">80%</StatusItem>
            </StatusBar>
        </WordWindow>
    )
}

const SystemTaskbar = () => (
    <Taskbar>
        <StartButton aria-label="Inicio">
            <svg width="15" height="15" viewBox="0 0 15 15" fill="#fff"><path d="M0 2.200 6.300 1.300v5.900H0zM7 1.200 15 0v7.200H7zM0 7.900h6.300v5.900L0 12.900zM7 7.900h8V15l-8-1.100z" /></svg>
        </StartButton>
        <SearchBox>
            <svg width="16" height="16" viewBox="0 0 16 16" fill="none" stroke="#333" strokeWidth="1.200"><circle cx="10.500" cy="5.500" r="4.800" /><path d="M7 9 .5 15.500" /></svg>
            <SearchInput placeholder="Buscar" />
        </SearchBox>
        <TaskButton aria-label="Noticias">
            <svg width="20" height="15" viewBox="0 0 20 15"><path d="M0 0h20v15H0z" fill="#eef3f8" /><path d="M5 3h9v10H5z" fill="#1979d2" /><path d="M2 2v11M15 4.500h4M15 7.500h4M15 10.500h4" stroke="#a9bdd0" /></svg>
        </TaskButton>
        <TaskButton aria-label="Pétalos">
            <svg width="21" height="21" viewBox="0 0 21 21">
                <path d="M1 6C4-1 16-2 20 5l-8 4-5-3z" fill="#3fa3c4" />
                <path d="M20 5c2 7-3 13-8 16l-2-9 2-5z" fill="#c4524e" />
                <path d="M1 5.500c5-2 10 1 11 6.500.5 3 .5 6-1 9C4 18 0 12 1 5.500z" fill="#5fc93c" />
                <path d="M2 6c4-1 8 1 9.500 6" stroke="#dff0d8" fill="none" />
            </svg>
        </TaskButton>
        <TaskButton aria-label="Estudio de música">
            <svg width="20" height="22" viewBox="0 0 20 22">
                <path d="M4 6C1 9 2 19 9 21c9-1 11-11 8-15-3-3-10-3-13 0z" fill="#f28a1c" />
                <path d="M11 5c6-2 9 4 6 10-2 4-5 6-8 6 5-4 5-10 2-16z" fill="#c2331d" />
                <path d="M9 6 6 2l4 1 2-3 1 4 4 0-4 3z" fill="#5db336" />
                <circle cx="7" cy="12" r="2" fill="#ffd35a" />
            </svg>
        </TaskButton>
        <TaskButton aria-label="Editor de video">
            <svg width="18" height="18" viewBox="0 0 18 18">
                <rect x=".5" y=".5" width="17" height="17" rx="3" fill="#1d2b38" stroke="#9aa3a8" />
                <circle cx="9" cy="6" r="2.700" fill="#58a7c9" /><circle cx="6" cy="11" r="2.700" fill="#8cc46e" /><circle cx="12" cy="11" r="2.700" fill="#d5535c" />
            </svg>
        </TaskButton>
        <TaskButton aria-label="Audio">
            <svg width="22" height="22" viewBox="0 0 22 22">
                <path d="M0 0h22v22H0z" fill="#2a2a2a" /><circle cx="11" cy="11" r="9.500" fill="#e8e8e8" />
                <path d="M6 8h8c3 0 3-2 6-2M1 12.500h9c5 0 5-3.500 11-3.500M4 16.500h6c6 0 6-4 11-4" stroke="#2a2a2a" strokeWidth="1.600" fill="none" />
            </svg>
        </TaskButton>
        <TaskButton aria-label="Cámara">
            <svg width="22" height="22" viewBox="0 0 22 22">
                <path d="M0 0h22v22H0z" fill="#14163f" /><path d="M3 18h16v2.500H3z" fill="#fff" /><circle cx="11" cy="10.500" r="6.500" fill="#333b48" stroke="#fff" strokeWidth="3.400" />
            </svg>
        </TaskButton>
        <TaskButton aria-label="Reproductor">
            <svg width="22" height="22" viewBox="0 0 22 22"><path d="m11 0 11 11-11 11L0 11z" fill="#5548dd" /><path d="m11 0 11 11H0z" fill="#6a5cf0" /><path d="m8.500 7 6 4-6 4z" fill="#fff" /></svg>
        </TaskButton>
        <TaskButton aria-label="Spotify">
            <svg width="22" height="22" viewBox="0 0 22 22"><circle cx="11" cy="11" r="10" fill="#111" /><FaSpotify size={22} color="#33d463" /></svg>
        </TaskButton>
        <TaskButton aria-label="Steam">
            <svg width="22" height="22" viewBox="0 0 22 22"><circle cx="11" cy="11" r="10" fill="#164b7d" /><path d="M.8 11.500 8 14.500l4-3.500 4-.5 3-4-3-3-4 1-1 4-3 4-6-2z" fill="#e4ebf2" /><circle cx="15" cy="7.800" r="3.900" fill="#e4ebf2" /><circle cx="15" cy="7.800" r="2.200" fill="#e4ebf2" stroke="#164b7d" /><circle cx="7.500" cy="14.500" r="2.800" fill="#e4ebf2" stroke="#164b7d" strokeWidth=".8" /></svg>
        </TaskButton>
        <TaskButton aria-label="Edge">
            <svg width="23" height="23" viewBox="0 0 23 23">
                <defs><linearGradient id="edge" x1="0" y1="0" x2="1" y2=".3"><stop offset="0" stopColor="#2aa5dc" /><stop offset="1" stopColor="#6bd65c" /></linearGradient></defs>
                <circle cx="11.500" cy="11.500" r="11" fill="#1467b8" />
                <path d="M.5 11C1 4 6 .5 11.500.5c7 0 11.500 5 11 9.500-.5 5-8 6-8.500 3 2-3 0-6-3.500-6S2 9 .5 11z" fill="url(#edge)" />
                <path d="M14 13c0 4 5 4 8 2-1 2-2 3-4 4-5 1-8-2-8-5 0-2 1-4 2-4 2 0 2 1 2 3z" fill="#464646" />
                <path d="M10 8c-5 2-6 10 0 13.500 5 1 9-1 11-4-5 2-10 0-10-4z" fill="#2b8bd6" />
            </svg>
        </TaskButton>
        <TaskButton aria-label="Discord">
            <svg width="22" height="22" viewBox="0 0 22 22"><circle cx="11" cy="11" r="11" fill="#5a64ea" /><FaDiscord x="4" y="4" size={14} color="#fff" /></svg>
        </TaskButton>
        <TaskButton aria-label="Explorador de archivos">
            <svg width="20" height="18" viewBox="0 0 20 18"><path d="M0 1h7l2 2h11v14H0z" fill="#eebd3e" /><path d="M0 5h20v12H0z" fill="#ffdc74" /><path d="M4 18v-7h12v7h-3v-4H7v4z" fill="#3f9fdc" /></svg>
        </TaskButton>
        <TaskButton $open aria-label="OBS">
            <svg width="21" height="21" viewBox="0 0 21 21">
                <circle cx="10.500" cy="10.500" r="9.800" fill="#262427" stroke="#c9c9c9" strokeWidth="1.200" />
                <g fill="#c9c9c9">
                    <path d="M9 3c-3 1-4 5-1 7l2 .5C8 8 8 5 9 3z" />
                    <path d="M9 3c-3 1-4 5-1 7l2 .5C8 8 8 5 9 3z" transform="rotate(120 10.500 10.500)" />
                    <path d="M9 3c-3 1-4 5-1 7l2 .5C8 8 8 5 9 3z" transform="rotate(240 10.500 10.500)" />
                </g>
            </svg>
        </TaskButton>
        <TaskButton $open $active aria-label="Chrome">
            <svg width="22" height="22" viewBox="0 0 22 22">
                <circle cx="11" cy="11" r="11" fill="#fbc116" />
                <path d="M1.500 5.500a11 11 0 0 1 19 0H11L6.200 13.700z" fill="#e23b2e" />
                <path d="M1.500 5.500A11 11 0 0 0 11 22l4.800-8.200H6.200z" fill="#2c9f49" />
                <circle cx="11" cy="11" r="5.200" fill="#fff" /><circle cx="11" cy="11" r="4.100" fill="#3a78e8" />
            </svg>
        </TaskButton>
        <TaskButton $open aria-label="Word">
            <svg width="20" height="20" viewBox="0 0 20 20">
                <rect x="4" width="16" height="20" rx="2" fill="#2f80e0" /><path d="M4 2q0-2 2-2h12q2 0 2 2v5H4z" fill="#6ac0f5" /><path d="M4 13h16v5q0 2-2 2H6q-2 0-2-2z" fill="#1b4fae" />
                <rect y="9" width="10" height="10" rx="1.500" fill="#1845a6" />
                <path d="m2.500 12 1.200 4.500L5 12.500l1.300 4L7.500 12" stroke="#fff" fill="none" />
            </svg>
        </TaskButton>
        <Tray>
            <TrayButton aria-label="Iconos ocultos"><svg width="11" height="7" fill="none" stroke="#fff" strokeWidth="1.300"><path d="M.5 6 5.500 1l5 5" /></svg></TrayButton>
            <TrayButton aria-label="Volumen">
                <svg width="16" height="14" viewBox="0 0 16 14" fill="none" stroke="#fff"><path d="M.5 5h2.500l3-3.500v11L3 9H.5zM8 5c1 1 1 3 0 4M10 3.500c2 2 2 5 0 7M12 2c3 3 3 7 0 10" /></svg>
            </TrayButton>
            <TrayButton aria-label="Red">
                <svg width="15" height="14" viewBox="0 0 15 14" fill="none" stroke="#fff"><path d="M5 2.500h9.500v7H3.500V6M9 9.500v3M6 12.500h6M.5.500h4v4h-4zM2.500 4.500v8" /></svg>
            </TrayButton>
            <TrayButton $w={30}>ESP</TrayButton>
            <Clock><span>8:54</span><span>2026/04/27</span></Clock>
            <TrayButton $w={44} aria-label="Notificaciones">
                <svg width="16" height="15" viewBox="0 0 16 15" fill="none" stroke="#fff"><path d="M.5.500h15v11h-5l-2.500 3v-3H.5z" /></svg>
            </TrayButton>
        </Tray>
    </Taskbar>
)

const App = () => {
    return (
        <Desktop>
            <GlobalStyle />
            <Workspace>
                <Word />
            </Workspace>
            <Browser />
            <SystemTaskbar />
        </Desktop>
    )
}
export default App
